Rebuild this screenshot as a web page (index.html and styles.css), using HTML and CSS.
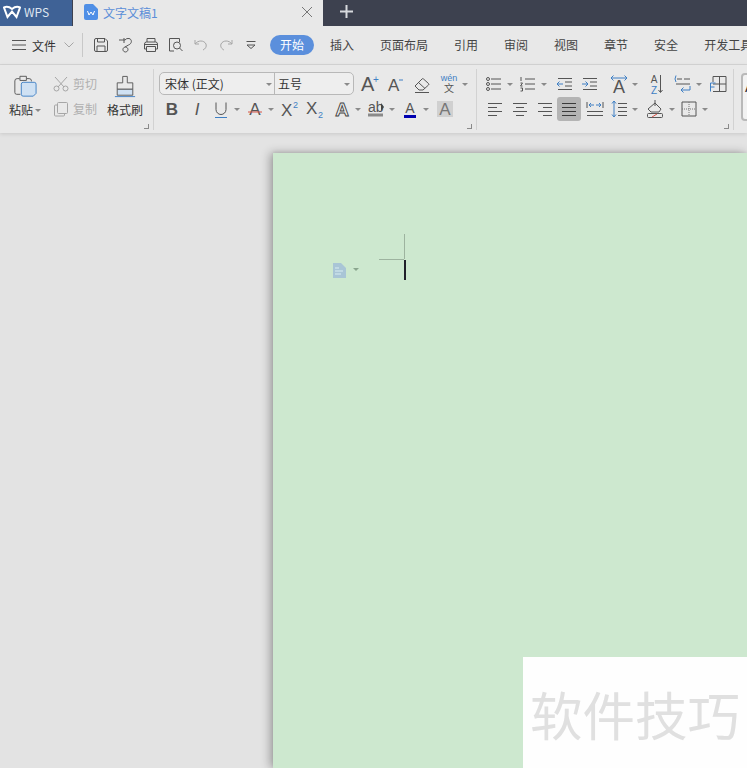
FILE: index.html
```html
<!DOCTYPE html>
<html lang="zh">
<head>
<meta charset="utf-8">
<title>文字文稿1</title>
<link rel="stylesheet" href="styles.css">
</head>
<body>
<div class="app">
  <header class="tabbar">
    <div class="wps-tab">
      <svg width="18" height="14" viewBox="0 0 18 14"><path d="M1 2.500C4 1 6 1.500 9 4c3-2.500 5-3 8-1.500L13.500 12 9 6.500 4.500 12z" class="logo"/></svg>
      <span>WPS</span>
    </div>
    <div class="doc-tab">
      <svg width="14" height="16" viewBox="0 0 14 16"><path d="M2 0h7l5 5v9a2 2 0 0 1-2 2H2a2 2 0 0 1-2-2V2a2 2 0 0 1 2-2z" fill="#4f8fe6"/><path d="M3.500 7l1.500 4 2-3 2 3 1.500-4" class="white-line"/></svg>
      <span class="doc-name">文字文稿1</span>
      <svg class="tab-close" width="12" height="12" viewBox="0 0 12 12"><path d="M1 1l10 10M11 1L1 11" class="gray-line"/></svg>
    </div>
    <svg class="tab-plus" width="13" height="13" viewBox="0 0 13 13"><path d="M6.500 0v13M0 6.500h13" class="plus-line"/></svg>
  </header>

  <nav class="menubar">
    <svg class="hamb" width="14" height="10" viewBox="0 0 14 10"><path d="M0 .5h14M0 5h14M0 9.500h14" class="ln"/></svg>
    <span class="file">文件</span>
    <svg class="chev" width="10" height="6" viewBox="0 0 10 6"><path d="M.5.500 5 5 9.500.500" class="ln-light"/></svg>
    <i class="menu-sep"></i>
    <div class="quick">
      <svg class="q" width="16" height="16" viewBox="0 0 16 16"><path d="M1.500 3a1.500 1.500 0 0 1 1.500-1.500h9L14.500 4v9a1.500 1.500 0 0 1-1.500 1.500H3A1.500 1.500 0 0 1 1.500 13zM4 14.500V9h8v5.500M4.500 1.500V5h7V1.500" class="ln"/></svg>
      <svg class="q" width="16" height="16" viewBox="0 0 16 16"><path d="M1 3h6a4 4 0 0 1 4-1.500c3 .5 3.500 5-.5 6.500L7 10M6 1v5M7.500 10a2.500 2.500 0 1 1-.1 0" class="ln"/></svg>
      <svg class="q" width="16" height="16" viewBox="0 0 16 16"><path d="M4 5V1.500h8V5M3 12H1.500V7A2 2 0 0 1 3.500 5h9a2 2 0 0 1 2 2v5H13M3.500 9.500h9v5h-9zM1.500 7.500h13" class="ln"/></svg>
      <svg class="q" width="16" height="16" viewBox="0 0 16 16"><path d="M6 14H1.500V1.500h10V5" class="ln"/><circle cx="9" cy="8.500" r="3.500" class="ln"/><path d="M11.500 11l3 3" class="ln"/></svg>
      <svg class="q" width="16" height="16" viewBox="0 0 16 16"><path d="M2 3v4h4M2 7c3-4 9-4 11 0 1 3-1 5-3 6" class="ln-light"/></svg>
      <svg class="q" width="16" height="16" viewBox="0 0 16 16"><path d="M14 3v4h-4M14 7c-3-4-9-4-11 0-1 3 1 5 3 6" class="ln-light"/></svg>
      <svg class="q" width="16" height="16" viewBox="0 0 16 16"><path d="M3.500 4.500h9M4 8l4 3.500L12 8z" class="ln"/></svg>
    </div>
    <ul class="tabs">
      <li class="tab-on">开始</li>
      <li>插入</li>
      <li>页面布局</li>
      <li>引用</li>
      <li>审阅</li>
      <li>视图</li>
      <li>章节</li>
      <li>安全</li>
      <li>开发工具</li>
    </ul>
  </nav>

  <section class="ribbon">
    <div class="group g-clip">
      <div class="big paste">
        <svg width="24" height="24" viewBox="0 0 26 26"><path d="M7 5H4.500A2.500 2.500 0 0 0 2 7.500V20a2 2 0 0 0 2 2h4M20 8V7.500A2.500 2.500 0 0 0 17.500 5H15M7.500 2.500h7V7h-7z" class="ln"/><path d="M9 11a2 2 0 0 1 2-2h12a2 2 0 0 1 2 2v10l-3 3H11a2 2 0 0 1-2-2z" fill="#cfe1f3" stroke="#3e7fc4"/></svg>
        <span class="lbl">粘贴<i class="caret"></i></span>
      </div>
      <div class="cc">
        <div class="cc-row"><svg width="16" height="16" viewBox="0 0 16 16"><path d="M2 1l9 10M14 1L5 11" class="ln-light"/><circle cx="3.500" cy="12.500" r="2.500" class="ln-light"/><circle cx="12.500" cy="12.500" r="2.500" class="ln-light"/></svg><span>剪切</span></div>
        <div class="cc-row"><svg width="16" height="16" viewBox="0 0 16 16"><path d="M5.500 1.500h8a1 1 0 0 1 1 1v9a1 1 0 0 1-1 1h-8a1 1 0 0 1-1-1v-9a1 1 0 0 1 1-1zM4.500 4H2.500a1 1 0 0 0-1 1v9a1 1 0 0 0 1 1h8a1 1 0 0 0 1-1v-2" class="ln-light"/></svg><span>复制</span></div>
      </div>
      <div class="big brush">
        <svg width="22" height="23" viewBox="0 0 24 25"><path d="M9.500 1.500h5v7h6v7h-17v-7h6z" class="ln"/><path d="M3.500 15.500h17V22h-17z" fill="#cfe1f3" stroke="#555"/><path d="M1 23.500h22" stroke="#3e7fc4" fill="none"/></svg>
        <span class="lbl">格式刷</span>
      </div>
      <i class="launch"></i>
    </div>

    <div class="group g-font">
      <div class="row">
        <div class="combo">
          <div class="combo-font">宋体 (正文)<i class="caret"></i></div>
          <div class="combo-size">五号<i class="caret"></i></div>
        </div>
        <span class="ic first-a"><svg viewBox="0 0 24 24"><text x="3" y="19" class="t t17">A</text><text x="15" y="11" class="tb t10">+</text></svg></span>
        <span class="ic next-a"><svg viewBox="0 0 24 24"><text x="5" y="19" class="t t15">A</text><path d="M16 8h4" stroke="#3e7fc4" fill="none"/></svg></span>
        <span class="ic next-b"><svg viewBox="0 0 24 24"><path d="M5 14l7-7a1 1 0 0 1 1.500 0l5 4.500a1 1 0 0 1 0 1.500l-5.500 5H9zM8.500 10.500l6.500 6M5 20.500h14" class="ln"/></svg></span>
        <span class="sp next-c"><svg viewBox="0 0 24 24"><text x="12" y="9" text-anchor="middle" class="tb t9">wén</text><text x="12" y="20" text-anchor="middle" class="t t11 cjk">文</text></svg><i class="caret"></i></span>
      </div>
      <div class="row">
        <span class="ic"><svg viewBox="0 0 24 24"><text x="12" y="18" text-anchor="middle" class="t t15 bold">B</text></svg></span>
        <span class="ic"><svg viewBox="0 0 24 24"><text x="12" y="18" text-anchor="middle" class="t t15 ital">I</text></svg></span>
        <span class="sp"><svg viewBox="0 0 24 24"><path d="M7 5.500v7a5 5 0 0 0 10 0v-7" class="ln"/><path d="M6 20.500h12" stroke="#3e7fc4" fill="none"/></svg><i class="caret"></i></span>
        <span class="sp"><svg viewBox="0 0 24 24"><text x="12" y="18" text-anchor="middle" class="t t15">A</text><path d="M5 15h14" stroke="#d8554a" fill="none"/></svg><i class="caret"></i></span>
        <span class="ic"><svg viewBox="0 0 24 24"><text x="3" y="19" class="t t15">X</text><text x="15" y="11" class="tb t9">2</text></svg></span>
        <span class="ic"><svg viewBox="0 0 24 24"><text x="3" y="17" class="t t15">X</text><text x="15" y="21" class="tb t9">2</text></svg></span>
        <span class="sp after-x"><svg viewBox="0 0 24 24"><text x="12" y="19" text-anchor="middle" class="outline">A</text></svg><i class="caret"></i></span>
        <span class="sp"><svg viewBox="0 0 24 24"><text x="4" y="15" class="t t14">ab</text><path d="M17 6l3 4-3 4z" fill="#444"/><path d="M4 18h15" stroke="#8a8a8a" stroke-width="3" fill="none"/></svg><i class="caret"></i></span>
        <span class="sp"><svg viewBox="0 0 24 24"><text x="12" y="16" text-anchor="middle" class="t t14">A</text><path d="M6 19.500h12" stroke="#0000b0" stroke-width="3" fill="none"/></svg><i class="caret"></i></span>
        <span class="ic"><svg viewBox="0 0 24 24"><rect x="4" y="4" width="16" height="16" fill="#d0d0d0"/><text x="12" y="18" text-anchor="middle" class="t t15 soft">A</text></svg></span>
      </div>
      <i class="launch"></i>
    </div>

    <div class="group g-para">
      <div class="row">
        <span class="sp"><svg viewBox="0 0 24 24"><path d="M9 7h10M9 12h10M9 17h10" class="ln"/><circle cx="6" cy="7" r="1.500" class="ln"/><circle cx="6" cy="12" r="1.500" class="ln"/><circle cx="6" cy="17" r="1.500" class="ln"/></svg><i class="caret"></i></span>
        <span class="sp"><svg viewBox="0 0 24 24"><path d="M9 7h10M9 12h10M9 17h10M5 5v4M4.500 11h2l-2 3h2M4.500 16h2v3h-2" class="ln"/></svg><i class="caret"></i></span>
        <span class="ic gap2"><svg viewBox="0 0 24 24"><path d="M5 6.500h14M12 10h7M12 14h7M5 17.500h14" class="ln"/><path d="M10 12H4M6.500 9.500 4 12l2.500 2.500" stroke="#3e7fc4" fill="none"/></svg></span>
        <span class="ic"><svg viewBox="0 0 24 24"><path d="M5 6.500h14M12 10h7M12 14h7M5 17.500h14" class="ln"/><path d="M4 12h6M7.500 9.500 10 12l-2.500 2.500" stroke="#3e7fc4" fill="none"/></svg></span>
        <span class="sp gap5"><svg viewBox="0 0 24 24"><text x="12" y="21" text-anchor="middle" class="t t16">A</text><path d="M4 6h16M6.500 3.500 4 6l2.500 2.500M17.500 3.500 20 6l-2.500 2.500" stroke="#3e7fc4" fill="none"/></svg><i class="caret"></i></span>
        <span class="ic gap2"><svg viewBox="0 0 24 24"><text x="10" y="11" text-anchor="middle" class="t t10">A</text><text x="10" y="22" text-anchor="middle" class="tb t10">Z</text><path d="M16.500 3v17M14.500 18l2 2.500 2-2.500" class="ln"/></svg></span>
        <span class="sp gap3"><svg viewBox="0 0 24 24"><path d="M6 7h5M13 7h6M5 12h14" class="ln"/><path d="M5 3.500l-1 3.500 1 3M19 14v4h-9M12.500 15.500 10 18l2.500 2.500" stroke="#3e7fc4" fill="none"/></svg><i class="caret"></i></span>
        <span class="ic"><svg viewBox="0 0 24 24"><path d="M7 10V4.500h13v15H7M13.500 4.500v15M7 12h13" class="ln"/><path d="M9.500 11H4.500v8.500M4.500 15h4" stroke="#3e7fc4" fill="none"/></svg></span>
      </div>
      <div class="row">
        <span class="ic"><svg viewBox="0 0 24 24"><path d="M5 6.500h14M5 10.500h9M5 14.500h14M5 18.500h9" class="ln"/></svg></span>
        <span class="ic"><svg viewBox="0 0 24 24"><path d="M5 6.500h14M8 10.500h8M5 14.500h14M8 18.500h8" class="ln"/></svg></span>
        <span class="ic"><svg viewBox="0 0 24 24"><path d="M5 6.500h14M10 10.500h9M5 14.500h14M10 18.500h9" class="ln"/></svg></span>
        <span class="ic active"><svg viewBox="0 0 24 24"><path d="M5 6.500h14M5 10.500h14M5 14.500h14M5 18.500h14" class="ln-dark"/></svg></span>
        <span class="ic gap1"><svg viewBox="0 0 24 24"><path d="M4 5v6M20 5v6M4 14.500h16M4 18.500h16" class="ln"/><path d="M6 8h5M8 6 6 8l2 2M13 8h5M16 6l2 2-2 2" stroke="#3e7fc4" fill="none"/></svg></span>
        <span class="sp"><svg viewBox="0 0 24 24"><path d="M11 6.500h9M11 10.500h9M11 14.500h9M11 18.500h9" class="ln"/><path d="M7 4v16M5 6.500 7 4l2 2.500M5 17.500 7 20l2-2.500" stroke="#3e7fc4" fill="none"/></svg><i class="caret"></i></span>
        <span class="sp gap3"><svg viewBox="0 0 24 24"><path d="M4 12l7-6 6 6-2 3H7zM11 3v6" class="ln"/><rect x="3.500" y="16.500" width="15" height="4" rx="1" class="ln"/><path d="M8 20l5-3" stroke="#d8554a" fill="none"/></svg><i class="caret"></i></span>
        <span class="sp neg"><svg viewBox="0 0 24 24"><path d="M5 5h14v14H5z" class="ln"/><path d="M12 5v14M5 12h14" class="ln-dash"/></svg><i class="caret"></i></span>
      </div>
      <i class="launch"></i>
    </div>

    <div class="group g-style">
      <div class="style-box">A</div>
    </div>
  </section>

  <main class="canvas">
    <div class="page">
      <svg class="doc-mark" width="14" height="16" viewBox="0 0 14 16"><path d="M0 1h8l5 5v10H0z" fill="#a9c5d6"/><path d="M2 6h4M2 9h8M2 12h6" stroke="#d9eef2" fill="none"/></svg>
      <i class="doc-caret"></i>
      <i class="crop-h"></i>
      <i class="crop-v"></i>
      <i class="cursor"></i>
      <div class="stamp">软件技巧</div>
    </div>
  </main>
</div>
</body>
</html>
```
FILE: styles.css
```css
* { box-sizing: border-box; }
html, body { margin: 0; height: 100%; overflow: hidden; }
body { font: 12px "Noto Sans CJK SC", "Liberation Sans", sans-serif; color: #444; }
i { display: block; font-style: normal; }
svg { display: block; flex: none; }
.app { width: 747px; height: 768px; display: flex; flex-direction: column; overflow: hidden; background: #e3e3e3; }

.ln { fill: none; stroke: #555; }
.ln-dark { fill: none; stroke: #3a3a3a; }
.ln-light { fill: none; stroke: #a6a6a6; }
.ln-dash { fill: none; stroke: #777; stroke-dasharray: 1 1; }
.logo { fill: none; stroke: #fff; stroke-width: 2; }
.white-line { fill: none; stroke: #fff; }
.gray-line { fill: none; stroke: #777; }
.plus-line { fill: none; stroke: #d8dade; stroke-width: 2; }

.t { font-family: "Liberation Sans", sans-serif; fill: #555; }
.tb { font-family: "Liberation Sans", sans-serif; fill: #3e7fc4; }
.t9 { font-size: 9px; }
.t10 { font-size: 10px; }
.t11 { font-size: 10px; }
.t14 { font-size: 14px; }
.t15 { font-size: 17px; }
.t16 { font-size: 18px; }
.t17 { font-size: 20px; }
.bold { font-weight: 700; }
.ital { font-style: italic; }
.soft { fill: #777; }
.cjk { font-family: "Noto Sans CJK SC", sans-serif; }
.outline { font: 700 19px "Liberation Sans", sans-serif; fill: #eee; stroke: #444; stroke-width: .9; }

.tabbar { height: 26px; flex: none; background: #3d414f; display: flex; align-items: stretch; }
.wps-tab { width: 72px; background: #3f6296; color: #dfe6f0; display: flex; align-items: center; gap: 3px; padding: 0 0 3px 3px; }
.doc-tab { width: 250px; margin-left: 1px; background: #e8e8e8; display: flex; align-items: center; padding: 0 10px 2px 11px; color: #5b8ed8; }
.doc-name { margin-left: 5px; flex: 1; }
.tab-plus { margin: 5px 0 0 17px; }

.menubar { height: 39px; flex: none; background: #e8e8e8; border-bottom: 1px solid #d6d6d6; display: flex; align-items: center; padding-left: 12px; }
.file { margin-left: 6px; color: #333; flex: none; white-space: nowrap; }
.chev { margin-left: 8px; }
.menu-sep { flex: none; width: 1px; height: 24px; background: #c8c8c8; margin-left: 8px; }
.quick { flex: none; display: flex; gap: 9px; margin-left: 10px; }
.tabs { flex: none; list-style: none; margin: 0 0 0 11px; padding: 0; display: flex; gap: 26px; white-space: nowrap; }
.tabs li { line-height: 20px; }
.tabs .tab-on { width: 44px; margin-right: -10px; text-align: center; background: #5b8fdc; color: #fff; border-radius: 10px; }

.ribbon { height: 68px; flex: none; background: #e9e9e9; display: flex; box-shadow: 0 1px 4px rgba(0, 0, 0, .12); position: relative; z-index: 2; }
.group { position: relative; margin: 4px 0 3px; }
.group::after { content: ""; position: absolute; right: 0; top: 0; bottom: 0; width: 1px; background: #d2d2d2; }
.g-clip { width: 154px; display: flex; padding-top: 2px; padding-left: 9px; }
.g-font { width: 323px; padding: 2.5px 0 0 5px; }
.g-para { width: 257px; padding: 2.5px 0 0 5px; }
.g-style { width: 13px; padding: 4px 0 0 7px; }
.g-style::after { display: none; }

.launch { position: absolute; right: 5px; bottom: 1px; width: 5px; height: 5px; border-right: 1px solid #8a8a8a; border-bottom: 1px solid #8a8a8a; }

.big { display: flex; flex-direction: column; align-items: center; }
.lbl { display: flex; align-items: center; line-height: 18px; color: #333; white-space: nowrap; }
.paste { width: 32px; }
.paste svg { margin-top: 3px; }
.paste .lbl { margin-top: 3px; }
.cc { width: 53px; margin-left: 12px; color: #b0b0b0; }
.cc-row { height: 25px; display: flex; align-items: center; gap: 4px; }
.brush { width: 36px; margin-left: 1px; }
.brush svg { margin-top: 4px; }
.brush .lbl { margin-top: 3px; }

.caret { width: 0; height: 0; border-left: 3px solid transparent; border-right: 3px solid transparent; border-top: 3px solid #8a8a8a; margin-top: 1px; }
.lbl .caret { margin-left: 2px; }

.row { display: flex; height: 25px; align-items: center; }
.ic { width: 25px; height: 24px; display: flex; align-items: center; justify-content: center; border-radius: 3px; }
.sp { width: 34px; height: 24px; display: flex; align-items: center; }
.ic svg, .sp svg { width: 24px; height: 24px; }
.sp .caret { margin-left: 1px; }
.active { background: #b4b4b4; width: 24px; }

.combo { width: 195px; height: 23px; margin-bottom: 1px; display: flex; border: 1px solid #b8b8b8; border-radius: 5px; background: #eeeeee; color: #333; }
.combo-font { width: 115px; display: flex; align-items: center; justify-content: space-between; padding: 0 2px 0 5px; border-right: 1px solid #b8b8b8; }
.combo-size { flex: 1; display: flex; align-items: center; justify-content: space-between; padding: 0 3px; }
.first-a { margin-left: 3px; }
.next-b { margin-left: 2px; }
.next-c { margin-left: 3px; }
.after-x { margin-left: 3px; }
.gap1 { margin-left: 1px; }
.gap2 { margin-left: 2px; }
.gap3 { margin-left: 3px; }
.gap5 { margin-left: 5px; }
.neg { margin-left: -1px; }

.style-box { width: 30px; height: 48px; border: 2px solid #b9b9b9; border-radius: 4px; background: #f2f2f2; color: #333; padding: 3px 2px; font: 16px "Liberation Sans", sans-serif; }

.canvas { flex: 1; min-height: 0; display: flex; padding: 20px 0 0 273px; background: #e3e3e3; overflow: hidden; }
.page { position: relative; flex: 1; background: #cde8cf; box-shadow: -3px 0 9px rgba(0, 0, 0, .3), 0 -1px 3px rgba(0, 0, 0, .08); }
.doc-mark { position: absolute; left: 60px; top: 109px; }
.doc-caret { position: absolute; left: 80px; top: 115px; width: 0; height: 0; border-left: 3px solid transparent; border-right: 3px solid transparent; border-top: 3px solid #8aa58e; }
.crop-h { position: absolute; left: 106px; top: 106px; width: 25px; height: 1px; background: #9db39f; }
.crop-v { position: absolute; left: 131px; top: 81px; width: 1px; height: 25px; background: #9db39f; }
.cursor { position: absolute; left: 131px; top: 107px; width: 2px; height: 20px; background: #20202a; }
.stamp { position: absolute; right: 0; bottom: 0; width: 224px; height: 111px; background: #fefefe; color: #e0e0e0; display: flex; align-items: center; padding-left: 7px; font-size: 52.500px; white-space: nowrap; overflow: hidden; }
```
